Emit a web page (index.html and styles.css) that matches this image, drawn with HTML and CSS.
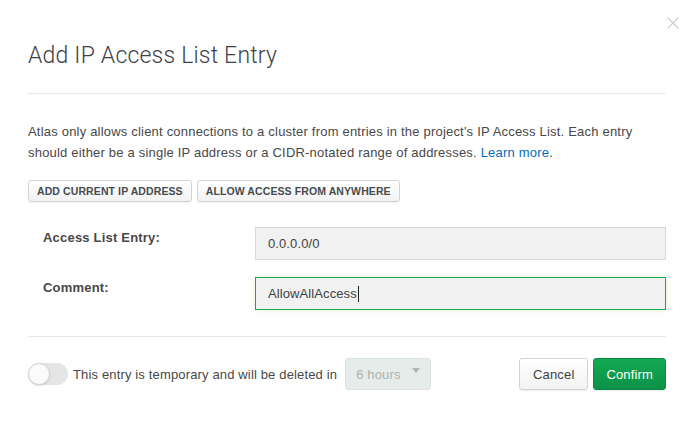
FILE: index.html
```html
<!DOCTYPE html>
<html>
<head>
<meta charset="utf-8">
<link rel="stylesheet" href="styles.css">
</head>
<body>
<div class="modal">
  <button class="close" aria-label="Close">
    <svg width="12" height="12" viewBox="0 0 12 12"><path d="M0.5 0.5 L11.5 11.5 M11.5 0.5 L0.5 11.5" stroke="#cfcfcf" stroke-width="1.2" fill="none"/></svg>
  </button>
  <div class="header">
    <h1 class="title">Add IP Access List Entry</h1>
  </div>
  <div class="body">
    <p class="intro">Atlas only allows client connections to a cluster from entries in the project's IP Access List. Each entry should either be a single IP address or a CIDR-notated range of addresses. <a class="link" href="#">Learn more</a>.</p>
    <div class="quick">
      <button class="btn-small">ADD CURRENT IP ADDRESS</button>
      <button class="btn-small">ALLOW ACCESS FROM ANYWHERE</button>
    </div>
    <div class="form">
      <div class="row">
        <label class="label">Access List Entry:</label>
        <div class="input">0.0.0.0/0</div>
      </div>
      <div class="row">
        <label class="label">Comment:</label>
        <div class="input focused">AllowAllAccess<span class="caret"></span></div>
      </div>
    </div>
  </div>
  <div class="footer">
    <div class="temp">
      <span class="toggle"><span class="knob"></span></span>
      <span class="temp-text">This entry is temporary and will be deleted in</span>
      <span class="select">6 hours<span class="arrow"></span></span>
    </div>
    <div class="actions">
      <button class="btn">Cancel</button>
      <button class="btn primary">Confirm</button>
    </div>
  </div>
</div>
</body>
</html>
```
FILE: styles.css
```css
* { box-sizing: border-box; }
html, body { margin: 0; padding: 0; background: #fff; }
body {
  font-family: "Liberation Sans", Arial, sans-serif;
  color: #494747;
  font-size: 13px;
}
.modal {
  position: relative;
  width: 693px;
  height: 424px;
  padding: 0 27px 0 28px;
}
.close {
  position: absolute;
  top: 17px;
  right: 14px;
  padding: 0;
  border: 0;
  background: none;
  width: 12px;
  height: 12px;
  display: block;
}
.close svg { display: block; }
.header {
  padding-top: 42px;
  padding-bottom: 23px;
  border-bottom: 1px solid #e7e7e7;
}
.title {
  margin: 0;
  font-family: Roboto, "Liberation Sans", sans-serif;
  font-weight: 300;
  font-size: 23px;
  line-height: 28px;
  color: #3d4245;
  letter-spacing: 0.2px;
}
.body { padding-top: 27px; border-bottom: 1px solid #e7e7e7; padding-bottom: 26px; }
.intro {
  margin: 0;
  font-size: 13px;
  line-height: 21px;
  letter-spacing: 0.2px;
  color: #494747;
}
.link { color: #006cbc; text-decoration: none; }
.quick {
  display: flex;
  gap: 5px;
  margin-top: 17px;
}
.btn-small {
  height: 22px;
  padding: 0 8px;
  font-family: "Liberation Sans", Arial, sans-serif;
  font-size: 10.5px;
  font-weight: bold;
  color: #464c4f;
  letter-spacing: 0.1px;
  border: 1px solid #d3d3d3;
  border-radius: 3px;
  background: linear-gradient(#ffffff, #f2f2f2);
  box-shadow: 0 1px 1px rgba(0,0,0,0.06);
}
.form {
  margin-top: 25px;
  display: flex;
  flex-direction: column;
  gap: 17px;
}
.row {
  display: flex;
  align-items: flex-start;
}
.label {
  width: 227px;
  padding-left: 15px;
  padding-top: 2px;
  font-weight: bold;
  font-size: 13px;
  line-height: 18px;
  letter-spacing: 0.2px;
  color: #494747;
}
.input {
  width: 411px;
  height: 33px;
  padding: 0 12px;
  display: flex;
  align-items: center;
  background: #f1f1f1;
  border: 1px solid #d9d9d9;
  font-size: 13px;
  letter-spacing: 0.1px;
  color: #3d4245;
}
.input.focused {
  border-color: #13aa52;
  box-shadow: 0 0 6px rgba(180, 220, 160, 0.45);
}
.caret {
  display: inline-block;
  width: 1px;
  height: 16px;
  background: #222;
  margin-left: 1px;
}
.footer {
  display: flex;
  align-items: center;
  justify-content: space-between;
  padding-top: 21px;
}
.temp { display: flex; align-items: center; }
.toggle {
  width: 40px;
  height: 22px;
  border-radius: 11px;
  background: #e5e5e5;
  position: relative;
  display: block;
}
.knob {
  position: absolute;
  left: 0;
  top: 0;
  width: 22px;
  height: 22px;
  border-radius: 50%;
  background: #fbfbfb;
  border: 1px solid #d6d6d6;
  box-shadow: 0 1px 2px rgba(0,0,0,0.12);
}
.temp-text { margin-left: 5px; font-size: 13px; letter-spacing: 0.15px; color: #494747; }
.select {
  margin-left: 8px;
  width: 86px;
  height: 32px;
  padding: 0 10px;
  display: flex;
  align-items: center;
  justify-content: space-between;
  background: #e6ecea;
  border: 1px solid #dbe3e0;
  border-radius: 3px;
  color: #aab3b1;
  font-size: 13px;
  letter-spacing: 0.15px;
}
.arrow {
  width: 0;
  height: 0;
  border-left: 4.5px solid transparent;
  border-right: 4.5px solid transparent;
  border-top: 5px solid #b0b6b5;
  margin-top: -8px;
}
.actions { display: flex; gap: 5px; }
.btn {
  height: 32px;
  padding: 0 13px;
  font-family: "Liberation Sans", Arial, sans-serif;
  font-size: 13px;
  letter-spacing: 0.15px;
  color: #3d4245;
  border: 1px solid #d3d3d3;
  border-radius: 3px;
  background: linear-gradient(#ffffff, #f2f2f2);
  box-shadow: 0 1px 1px rgba(0,0,0,0.08);
}
.btn.primary {
  color: #fff;
  border-color: #0b8a45;
  background: linear-gradient(#13aa52, #0c9248);
  padding: 0 12px;
}
```
